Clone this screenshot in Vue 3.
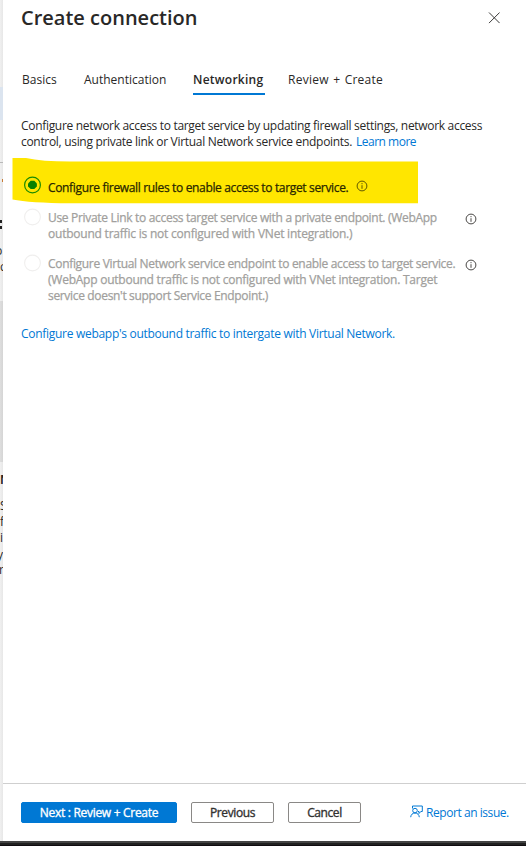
<script setup>
const tabs = [
  { label: 'Basics', cls: 'basics' },
  { label: 'Authentication', cls: 'auth' },
  { label: 'Networking', cls: 'net active' },
  { label: 'Review + Create', cls: 'review' },
]

const options = [
  {
    cls: 'firewall',
    checked: true,
    lines: ['Configure firewall rules to enable access to target service.'],
  },
  {
    cls: 'private',
    checked: false,
    lines: [
      'Use Private Link to access target service with a private endpoint. (WebApp',
      'outbound traffic is not configured with VNet integration.)',
    ],
  },
  {
    cls: 'vnet',
    checked: false,
    lines: [
      'Configure Virtual Network service endpoint to enable access to target service.',
      '(WebApp outbound traffic is not configured with VNet integration. Target',
      "service doesn't support Service Endpoint.)",
    ],
  },
]
</script>

<template>
  <div class="screen">
    <div class="behind" aria-hidden="true">
      <i class="band blue"></i>
      <i class="rule"></i>
      <i class="spark"></i>
      <i class="mark m1"></i>
      <i class="mark m2"></i>
      <i class="band grey"></i>
      <span class="bit b1">p</span>
      <span class="bit b2">c</span>
      <span class="bit b3">N</span>
      <span class="bit b4">S</span>
      <span class="bit b5">f</span>
      <span class="bit b6">i</span>
      <span class="bit b7">y</span>
      <span class="bit b8">r</span>
    </div>

    <section class="panel">
      <header class="head">
        <h1>Create connection</h1>
        <svg class="close" width="12" height="12" viewBox="0 0 12 12">
          <path d="M1 .5l10.6 10.6M11.6.5L1 11.1" fill="none" stroke="#3b3a39" stroke-width="1" />
        </svg>
      </header>

      <nav class="tabs">
        <a v-for="t in tabs" :key="t.label" class="tab" :class="t.cls">{{ t.label }}</a>
      </nav>

      <div class="desc">
        <div class="line d1">Configure network access to target service by updating firewall settings, network access</div>
        <div class="line d2"><span>control, using private link or Virtual Network service endpoints.</span><a class="learn">Learn more</a></div>
      </div>

      <div class="options">
        <svg class="highlight" width="407" height="48" viewBox="0 0 407 48">
          <path d="M.5 0H14Q30 3.5 58 3.6H406V45.3H58Q18 45 .5 41.5Z" fill="#ffe600" />
        </svg>
        <div v-for="o in options" :key="o.cls" class="option" :class="o.cls">
          <svg class="radio" width="18" height="18" viewBox="0 0 18 18">
            <template v-if="o.checked">
              <circle cx="8.5" cy="9" r="7.9" fill="none" stroke="#1b8a00" stroke-width="1.2" />
              <path d="M6.7 4.7h3.6l2.6 2.7v3L10.3 13.1H6.7L4 10.4v-3z" fill="#078000" />
            </template>
            <circle v-else cx="8.5" cy="9" r="7.9" fill="#fff" stroke="#f0efee" stroke-width="1.1" />
          </svg>
          <div class="label">
            <div v-for="(l, i) in o.lines" :key="i" class="line" :class="'l' + i"><span>{{ l }}</span></div>
          </div>
          <svg class="info" width="12" height="12" viewBox="0 0 12 12">
            <circle cx="6" cy="6" r="4.9" fill="none" stroke="currentColor" stroke-width="1" />
            <path d="M6 5.2v3.6M6 3.1v1.1" fill="none" stroke="currentColor" stroke-width="1" />
          </svg>
        </div>
      </div>

      <a class="line outbound"><span>Configure webapp's outbound traffic to intergate with Virtual Network.</span></a>

      <footer class="foot">
        <button class="btn primary">Next : Review + Create</button>
        <button class="btn previous">Previous</button>
        <button class="btn cancel">Cancel</button>
        <a class="report">
          <svg width="13" height="13" viewBox="0 0 13 13" fill="none" stroke="#0078d4" stroke-width="1">
            <path d="M2.5 3.5V1h9.8v5.5h-1.5l-1.8 2V6.5H8" />
            <circle cx="5" cy="5.6" r="2.3" />
            <path d="M.7 12.2C.9 9.6 2.6 8 5 8s4.1 1.6 4.3 4.2" />
          </svg>
          <span>Report an issue.</span>
        </a>
      </footer>
    </section>
    <div class="taskbar"></div>
  </div>
</template>

<style>
body { margin: 0; }
</style>

<style scoped>
.screen {
  position: relative;
  width: 526px;
  height: 846px;
  overflow: hidden;
  display: flex;
  flex-direction: column;
  background: #eeeeee;
  font-family: "Open Sans", "Noto Sans", sans-serif;
  font-size: 12px;
  line-height: 16px;
  color: #292827;
}
.behind {
  position: absolute;
  left: 0;
  top: 0;
  width: 3px;
  height: 841px;
  overflow: hidden;
  background: linear-gradient(90deg, #f0f0f0, #e7e7e7);
}
.behind > * { position: absolute; left: 0; }
.band { width: 3px; }
.blue { top: 87px; height: 33px; background: #dbe4ef; }
.rule { top: 162px; width: 3px; height: 1px; background: #b9b9b9; }
.behind .spark { top: 179px; left: 2px; width: 1px; height: 3px; background: #c77b35; }
.mark { width: 2px; height: 3px; background: #222; }
.m1 { top: 220px; }
.m2 { top: 226px; }
.grey { top: 301px; height: 161px; background: linear-gradient(90deg, #dedede, #d5d5d5); }
.bit { line-height: 16px; }
.behind .b1 { top: 243px; left: -5px; }
.behind .b2 { top: 259px; left: 0; }
.behind .b3 { top: 472px; left: 0; font-weight: 700; }
.behind .b4 { top: 498px; }
.behind .b5 { top: 514px; }
.behind .b6 { top: 530px; }
.behind .b7 { top: 547px; left: -3px; }
.behind .b8 { top: 562px; left: -1px; }

.panel {
  position: relative;
  margin-left: 3px;
  height: 841px;
  background: #fff;
  display: flex;
  flex-direction: column;
}
.head {
  display: flex;
  justify-content: space-between;
  align-items: flex-start;
  padding: 4px 26px 0 18px;
  height: 64px;
}
h1 {
  margin: 0;
  font-size: 20px;
  line-height: 28px;
  font-weight: 600;
  white-space: nowrap;
}
.close { margin-top: 8px; }
.tabs {
  display: flex;
  padding-left: 19px;
  height: 28px;
}
.tab {
  box-sizing: border-box;
  height: 27px;
  padding-top: 4px;
  white-space: nowrap;
  flex: none;
}
.basics { width: 62px; }
.auth { width: 109px; }
.net { width: 72px; margin-right: 23px; font-weight: 600; letter-spacing: .25px; }
.review { word-spacing: 1px; letter-spacing: .26px; }
.active { border-bottom: 2px solid #0078d4; }
.line { height: 16px; white-space: nowrap; }
.desc { padding: 22px 0 0 18px; }
.d1 { letter-spacing: -.31px; }
.d2 { display: flex; letter-spacing: -.31px; }
.learn { margin-left: 4px; color: #0078d4; letter-spacing: -.5px; }
.options {
  position: relative;
  margin-top: 29px;
  padding-left: 21px;
}
.highlight {
  position: absolute;
  left: 9px;
  top: -21px;
}
.option {
  position: relative;
  display: flex;
  align-items: flex-start;
  color: #a19f9d;
  -webkit-text-stroke: .25px currentColor;
}
.radio { flex: none; margin: -2px 6px 0 0; }
.label { width: 417px; }
.info { flex: none; color: #4a4846; }
.firewall { color: #292700; height: 31px; letter-spacing: -.34px; }
.firewall .radio { margin-top: -3px; }
.firewall .label { width: 308px; padding-top: 1px; }
.firewall .info { color: #5f5700; margin-top: 1px; }
.private { height: 46px; }
.private .l0 { letter-spacing: -.31px; }
.private .l1 { letter-spacing: -.22px; }
.vnet .l0 { letter-spacing: -.32px; }
.vnet .l1 { letter-spacing: -.24px; }
.vnet .l2 { letter-spacing: -.33px; }
.private .info, .vnet .info { margin-top: 3px; }
.vnet { height: 48px; }
.outbound { margin: 22px 0 0 18px; color: #0078d4; letter-spacing: -.29px; }
.foot {
  margin-top: auto;
  height: 58px;
  box-sizing: border-box;
  border-top: 1px solid #cfcfcf;
  padding: 18px 0 0 18px;
  display: flex;
}
.btn {
  box-sizing: border-box;
  flex: none;
  height: 21px;
  padding: 0;
  border: 1px solid #8a8886;
  border-radius: 2px;
  background: #fff;
  font: 400 12px/18px "Open Sans", "Noto Sans", sans-serif;
  letter-spacing: -.4px;
  color: #323130;
  white-space: nowrap;
  -webkit-text-stroke: .35px currentColor;
}
.primary { width: 156px; margin-right: 14px; background: #0078d4; border-color: #0078d4; color: #fff; letter-spacing: -.3px; }
.previous { width: 83px; margin-right: 14px; }
.cancel { width: 73px; margin-right: 49px; }
.report { display: flex; color: #0078d4; padding-top: 3px; white-space: nowrap; letter-spacing: -.44px; }
.report svg { margin: 0 3px 0 0; flex: none; }
.taskbar {
  height: 5px;
  background: linear-gradient(#444 0 2px, #202020 2px 4px, #100c10 4px);
}
</style>
